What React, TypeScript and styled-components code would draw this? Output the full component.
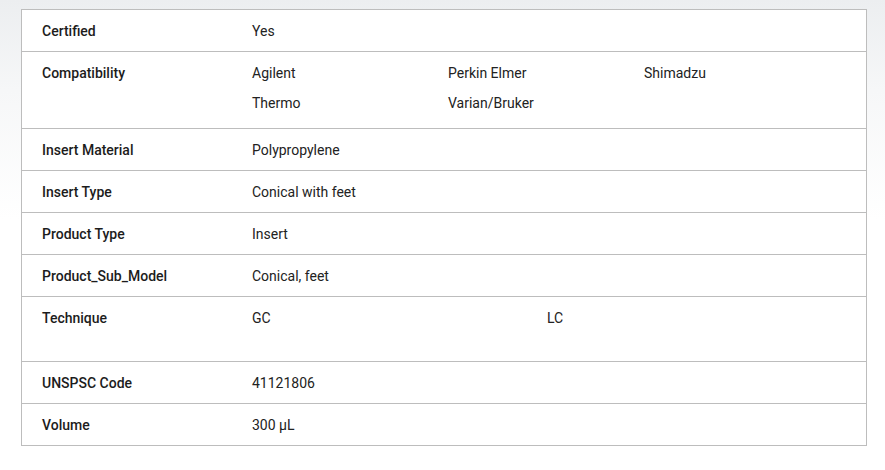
import React from "react";
import styled, { createGlobalStyle } from "styled-components";

interface SpecRow {
    label: string;
    values: string[];
    columns: number;
    bottom?: number;
}

const specs: SpecRow[] = [
    { label: "Certified", values: ["Yes"], columns: 1 },
    { label: "Compatibility", values: ["Agilent", "Perkin Elmer", "Shimadzu", "Thermo", "Varian/Bruker"], columns: 3, bottom: 15 },
    { label: "Insert Material", values: ["Polypropylene"], columns: 1 },
    { label: "Insert Type", values: ["Conical with feet"], columns: 1 },
    { label: "Product Type", values: ["Insert"], columns: 1 },
    { label: "Product_Sub_Model", values: ["Conical, feet"], columns: 1 },
    { label: "Technique", values: ["GC", "LC"], columns: 2, bottom: 33 },
    { label: "UNSPSC Code", values: ["41121806"], columns: 1 },
    { label: "Volume", values: ["300 µL"], columns: 1 },
];

const App: React.FC = () => {
    return (
        <Page>
            <GlobalStyle />
            <SpecTable>
                {specs.map(row => (
                    <Row key={row.label} bottom={row.bottom ?? 10}>
                        <Label>{row.label}</Label>
                        <Values columns={row.columns}>
                            {row.values.map(v => <Value key={v}>{v}</Value>)}
                        </Values>
                    </Row>
                ))}
            </SpecTable>
        </Page>
    );
};

const GlobalStyle = createGlobalStyle`
    html, body {
        margin: 0;
        padding: 0;
    }

    body {
        font-family: Roboto, "Liberation Sans", sans-serif;
        background: #ffffff;
    }
`;

const Page = styled.div`
    min-height: 470px;
    padding: 9px 19px 0 21px;
    box-sizing: border-box;
    background: linear-gradient(180deg, #eceef0 0px, #f6f7f8 90px, #ffffff 220px);
`;

const SpecTable = styled.div`
    width: 846px;
    box-sizing: border-box;
    border: 1px solid #bdbdbd;
    background-color: #ffffff;
`;

const Row = styled.div<{ bottom: number }>`
    display: grid;
    grid-template-columns: 210px 590px;
    padding: 11px 20px ${({ bottom }) => bottom}px;
    border-top: 1px solid #bdbdbd;

    &:first-child {
        border-top: none;
    }
`;

const Label = styled.div`
    font-size: 14px;
    line-height: 20px;
    font-weight: 500;
    color: #1c1c1c;
`;

const Values = styled.div<{ columns: number }>`
    display: grid;
    grid-template-columns: repeat(${({ columns }) => columns}, ${({ columns }) => (columns === 2 ? "295px" : "196px")});
    row-gap: 10px;
`;

const Value = styled.div`
    font-size: 14px;
    line-height: 20px;
    color: #222222;
`;

export default App;
